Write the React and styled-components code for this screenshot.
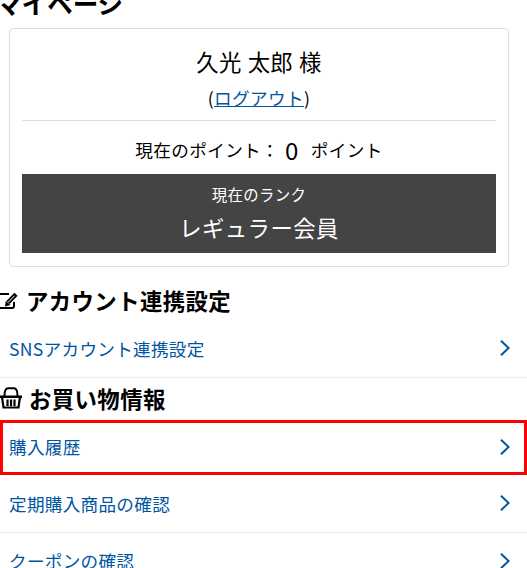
import React from 'react';
import styled, { createGlobalStyle } from 'styled-components';

const Global = createGlobalStyle`
    html, body {
        margin: 0;
        padding: 0;
        background: #fff;
        overflow: hidden;
    }
    body {
        font-family: "Noto Sans CJK JP", "Noto Sans", sans-serif;
        color: #000;
        letter-spacing: 0.4px;
    }
`;

const Page = styled.div`
    width: 527px;
    height: 568px;
    overflow: hidden;
`;
const Title = styled.h1`
    margin: -15px 0 0 -4px;
    font-size: 25.6px;
    line-height: 36px;
    font-weight: 700;
    letter-spacing: 0;
`;
const Card = styled.section`
    margin: 7px 18px 0 9px;
    padding: 12px;
    height: 239px;
    box-sizing: border-box;
    border: 1px solid #ddd;
    border-radius: 4px;
`;
const Name = styled.div`
    margin-top: 4px;
    text-align: center;
    font-size: 22.4px;
    line-height: 32px;
    letter-spacing: 0.2px;
    word-spacing: 1px;
`;
const Logout = styled.div`
    margin-top: 8px;
    padding-bottom: 9px;
    text-align: center;
    font-size: 17.6px;
    line-height: 26px;
    border-bottom: 1px solid #ddd;
    a {
        color: #00559f;
        text-decoration: underline;
    }
`;
const Points = styled.div`
    height: 53px;
    padding-top: 4px;
    box-sizing: border-box;
    display: flex;
    align-items: center;
    justify-content: center;
    font-size: 17.6px;
    strong {
        font-weight: 400;
        font-size: 24px;
        margin: 0 12px 0 6px;
    }
`;
const Rank = styled.div`
    height: 79px;
    background: #444;
    color: #fff;
    text-align: center;
    small {
        display: block;
        padding-top: 9px;
        font-size: 15.4px;
        line-height: 22px;
    }
    b {
        display: block;
        margin-top: 6px;
        font-weight: 400;
        font-size: 22.4px;
        line-height: 32px;
    }
`;
const Heading = styled.h2`
    margin: ${p => p.$top}px 0 0;
    height: 32px;
    display: flex;
    align-items: center;
    gap: ${p => p.$gap}px;
    font-size: 22.4px;
    font-weight: 700;
    line-height: 32px;
    svg {
        flex: none;
    }
`;
const Row = styled.a`
    display: flex;
    align-items: center;
    justify-content: space-between;
    box-sizing: border-box;
    height: ${p => p.$height}px;
    padding: ${p => p.$top || 0}px 17px ${p => p.$bottom || 0}px 9px;
    color: #00559f;
    font-size: 17.6px;
    letter-spacing: 0.3px;
    border-bottom: ${p => (p.$plain ? 'none' : '1px solid #eee')};
`;
const Highlight = styled.div`
    position: relative;
    margin-top: 6px;
    &::after {
        content: "";
        position: absolute;
        inset: 0;
        border: 3px solid #f00;
    }
`;

const Chevron = () => (
    <svg width="10" height="16" viewBox="0 0 10 16" fill="none" stroke="#00559f" strokeWidth="2">
        <path d="M1 .8 8.6 8 1 15.2" />
    </svg>
);

const EditIcon = () => (
    <svg width="20" height="19" viewBox="0 0 20 19" fill="none" stroke="#000">
        <path strokeWidth="2" d="M9 3H-1M-1 17h13q2 0 2-2v-4" />
        <path strokeWidth="4.4" d="M8 11.5 16 3.2" />
        <path fill="#000" stroke="none" d="M5 15.5 5.8 10 10.5 14z" />
        <path stroke="#fff" strokeWidth="1" d="M8 11.5 14.5 4.8" />
    </svg>
);

const BasketIcon = () => (
    <svg width="22" height="22" viewBox="0 0 22 22" fill="none" stroke="#000" strokeWidth="2">
        <path d="M4.5 9C4.5 3 6 1.2 8 1.2h6c2 0 3.5 1.800 3.500 7.800" />
        <path fill="#000" stroke="none" d="M0 8.500h22V11H0z" />
        <path strokeWidth="2.200" d="M2 10l1.500 10.500h15L20 10M7.500 12.500V19M11 12.500V19M14.500 12.500V19" />
    </svg>
);

const App = () => (
    <Page>
        <Global />
        <Title>マイページ</Title>
        <Card>
            <Name>久光 太郎 様</Name>
            <Logout>(<a>ログアウト</a>)</Logout>
            <Points>現在のポイント： <strong>0</strong> ポイント</Points>
            <Rank>
                <small>現在のランク</small>
                <b>レギュラー会員</b>
            </Rank>
        </Card>
        <Heading $top={17} $gap={6}><EditIcon />アカウント連携設定</Heading>
        <Row $height={62} $top={3}>SNSアカウント連携設定<Chevron /></Row>
        <Heading $top={4} $gap={7}><BasketIcon />お買い物情報</Heading>
        <Highlight>
            <Row $height={55} $bottom={2} $plain>購入履歴<Chevron /></Row>
        </Highlight>
        <Row $height={58} $bottom={1}>定期購入商品の確認<Chevron /></Row>
        <Row $height={57} $bottom={1}>クーポンの確認<Chevron /></Row>
    </Page>
);

export default App;
